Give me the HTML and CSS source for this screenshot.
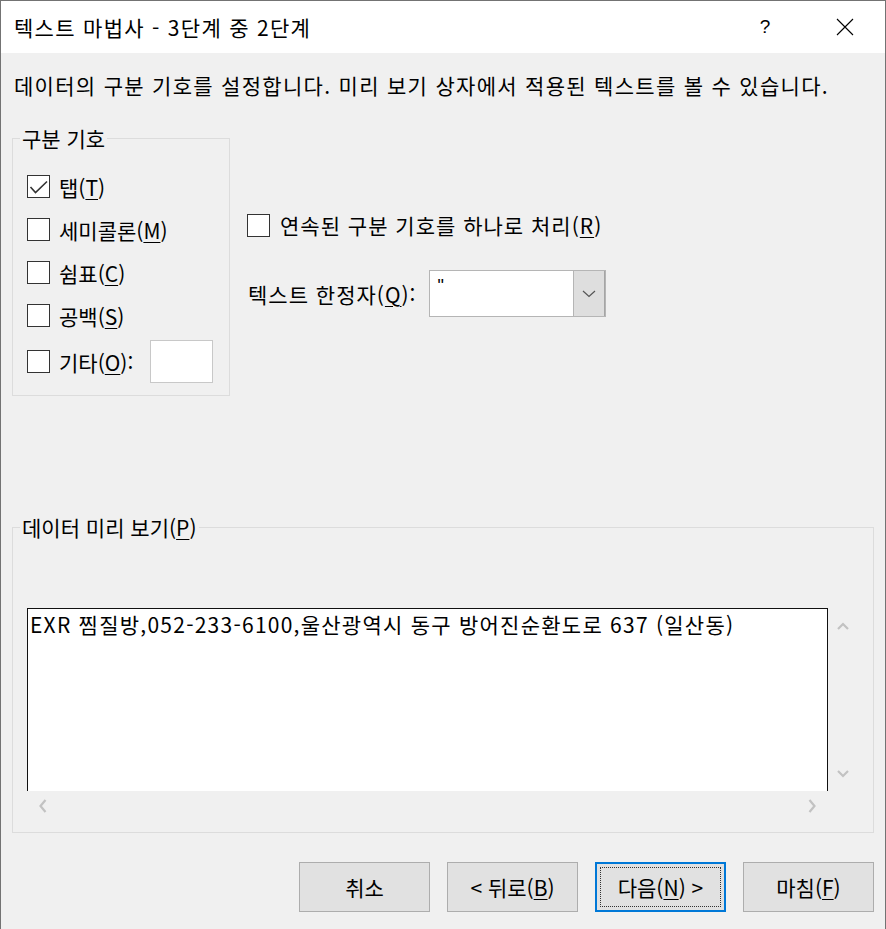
FILE: index.html
```html
<!DOCTYPE html>
<html lang="ko">
<head>
    <meta charset="UTF-8">
    <meta name="viewport" content="width=device-width, initial-scale=1.0">
    <title>텍스트 마법사 - 3단계 중 2단계</title>
    <link rel="stylesheet" href="styles.css">
</head>
<body>
    <div class="window">
        <div class="titlebar">
            <span class="title">텍스트 마법사 - 3단계 중 2단계</span>
            <span class="caption-btn help">?</span>
            <span class="caption-btn close">
                <svg width="18" height="18" viewBox="0 0 18 18">
                    <path d="M1 1 L17 17 M17 1 L1 17" stroke="#000" stroke-width="1.1" fill="none"/>
                </svg>
            </span>
        </div>

        <div class="content">
            <p class="intro">데이터의 구분 기호를 설정합니다. 미리 보기 상자에서 적용된 텍스트를 볼 수 있습니다.</p>

            <div class="options">
                <fieldset class="group delims">
                    <legend>구분 기호</legend>
                    <label class="check-row">
                        <span class="box checked">
                            <svg width="21" height="21" viewBox="0 0 21 21">
                                <polyline points="2.5,11 7.5,16.5 19,5.5" stroke="#333" stroke-width="1.6" fill="none"/>
                            </svg>
                        </span>
                        <span>탭(<u>T</u>)</span>
                    </label>
                    <label class="check-row">
                        <span class="box"></span>
                        <span>세미콜론(<u>M</u>)</span>
                    </label>
                    <label class="check-row">
                        <span class="box"></span>
                        <span>쉼표(<u>C</u>)</span>
                    </label>
                    <label class="check-row">
                        <span class="box"></span>
                        <span>공백(<u>S</u>)</span>
                    </label>
                    <label class="check-row other">
                        <span class="box"></span>
                        <span>기타(<u>O</u>):</span>
                        <span class="other-input"></span>
                    </label>
                </fieldset>

                <div class="side">
                    <label class="check-row">
                        <span class="box"></span>
                        <span class="wide">연속된 구분 기호를 하나로 처리(<u>R</u>)</span>
                    </label>
                    <div class="qualifier">
                        <span class="wide">텍스트 한정자(<u>Q</u>):</span>
                        <div class="combo">
                            <span class="combo-value">"</span>
                            <span class="combo-btn">
                                <svg width="14" height="8" viewBox="0 0 14 8">
                                    <polyline points="1,1 7,6.5 13,1" stroke="#555" stroke-width="1.2" fill="none"/>
                                </svg>
                            </span>
                        </div>
                    </div>
                </div>
            </div>

            <fieldset class="group preview">
                <legend>데이터 미리 보기(<u>P</u>)</legend>
                <div class="listbox">
                    <div class="list-text">EXR 찜질방,052-233-6100,울산광역시 동구 방어진순환도로 637 (일산동)</div>
                    <div class="vscroll">
                        <svg width="12" height="8" viewBox="0 0 12 8">
                            <polyline points="1,7 6,2 11,7" stroke="#c2c2c2" stroke-width="2.2" fill="none"/>
                        </svg>
                        <svg width="12" height="8" viewBox="0 0 12 8">
                            <polyline points="1,1 6,6 11,1" stroke="#c2c2c2" stroke-width="2.2" fill="none"/>
                        </svg>
                    </div>
                    <div class="hscroll">
                        <svg width="8" height="14" viewBox="0 0 8 14">
                            <polyline points="6.5,1 1.5,7 6.5,13" stroke="#c2c2c2" stroke-width="2.2" fill="none"/>
                        </svg>
                        <svg width="8" height="14" viewBox="0 0 8 14">
                            <polyline points="1.5,1 6.5,7 1.5,13" stroke="#c2c2c2" stroke-width="2.2" fill="none"/>
                        </svg>
                    </div>
                    <div class="corner"></div>
                </div>
            </fieldset>

            <div class="buttons">
                <button type="button">취소</button>
                <button type="button">&lt; 뒤로(<u>B</u>)</button>
                <button type="button" class="default"><span class="focus">다음(<u>N</u>) &gt;</span></button>
                <button type="button">마침(<u>F</u>)</button>
            </div>
        </div>
    </div>
</body>
</html>
```

FILE: styles.css
```css
body {
    margin: 0;
    font-family: "Noto Sans CJK KR", "Noto Sans", sans-serif;
    font-size: 21px;
    color: #000;
    background: #f0f0f0;
}
.window {
    width: 886px;
    height: 929px;
    box-sizing: border-box;
    border: 1px solid #737373;
    border-bottom: none;
    background: #f0f0f0;
    display: flex;
    flex-direction: column;
}
.titlebar {
    height: 52px;
    flex-shrink: 0;
    background: #fff;
    display: flex;
    align-items: center;
    padding-left: 13px;
}
.title {
    flex: 1;
    font-size: 21px;
    letter-spacing: 1.3px;
}
.caption-btn {
    width: 80px;
    height: 52px;
    display: flex;
    justify-content: center;
    align-items: center;
}
.help {
    font-family: "Liberation Sans", sans-serif;
    font-size: 19px;
}
.content {
    padding: 0 11px 0 11px;
}
.intro {
    margin: 17px 0 0 2px;
    line-height: 30px;
    letter-spacing: 1.3px;
}
.wide {
    letter-spacing: 1px;
}
.options {
    display: flex;
    margin-top: 26px;
}
.group {
    margin: 0;
    border: 1px solid #dcdcdc;
    min-width: 0;
}
.group legend {
    padding: 0 2px;
    margin-left: -7px;
    line-height: 24px;
}
.delims {
    width: 218px;
    box-sizing: border-box;
    padding: 15px 0 9px 14px;
}
.check-row {
    display: flex;
    align-items: center;
    gap: 9px;
    height: 43px;
}
.box {
    width: 21px;
    height: 21px;
    border: 1px solid #333;
    background: #fff;
    flex-shrink: 0;
}
.box svg {
    display: block;
}
u {
    text-decoration-thickness: 1px;
    text-underline-offset: 3px;
}
.check-row.other {
    height: 49px;
}
.other-input {
    width: 61px;
    height: 41px;
    border: 1px solid #c8c8c8;
    background: #fff;
    margin-left: 8px;
}
.side {
    padding: 87px 0 0 17px;
}
.side .check-row {
    gap: 10px;
    height: 24px;
}
.qualifier {
    display: flex;
    align-items: center;
    margin-top: 33px;
    padding-left: 1px;
}
.combo {
    display: flex;
    width: 177px;
    height: 47px;
    box-sizing: border-box;
    border: 1px solid #b5b5b5;
    background: #fff;
    margin-left: 13px;
}
.combo-value {
    flex: 1;
    padding: 5px 0 0 7px;
    font-family: "Liberation Sans", sans-serif;
    font-size: 18px;
}
.combo-btn {
    width: 30px;
    background: #dedede;
    border-left: 1px solid #b5b5b5;
    border-right: 1px solid #a5a5a5;
    display: flex;
    justify-content: center;
    align-items: center;
}
.preview {
    margin-top: 119px;
    height: 318px;
    box-sizing: border-box;
    padding: 69px 14px 0 14px;
}
.listbox {
    display: grid;
    grid-template-columns: 801px 30px;
    grid-template-rows: 183px 30px;
}
.list-text {
    background: #fff;
    border: 1px solid #111;
    border-bottom: none;
    padding: 0 0 0 2px;
    line-height: 30px;
    letter-spacing: 1.25px;
    white-space: nowrap;
    overflow: hidden;
}
.vscroll {
    display: flex;
    flex-direction: column;
    justify-content: space-between;
    align-items: center;
    padding: 14px 0 13px;
}
.hscroll {
    display: flex;
    justify-content: space-between;
    align-items: center;
    padding: 0 12px 0 12px;
}
.buttons {
    display: flex;
    justify-content: flex-end;
    gap: 17px;
    margin-top: 29px;
}
button {
    width: 131px;
    height: 50px;
    font-family: inherit;
    font-size: 21px;
    background: #e1e1e1;
    border: 1px solid #adadad;
    padding: 0;
    color: #000;
}
button.default {
    border: 2px solid #0078d7;
    padding: 3px;
}
.focus {
    display: flex;
    height: 100%;
    align-items: center;
    justify-content: center;
    border: 1px dotted #333;
    box-sizing: border-box;
}
```
